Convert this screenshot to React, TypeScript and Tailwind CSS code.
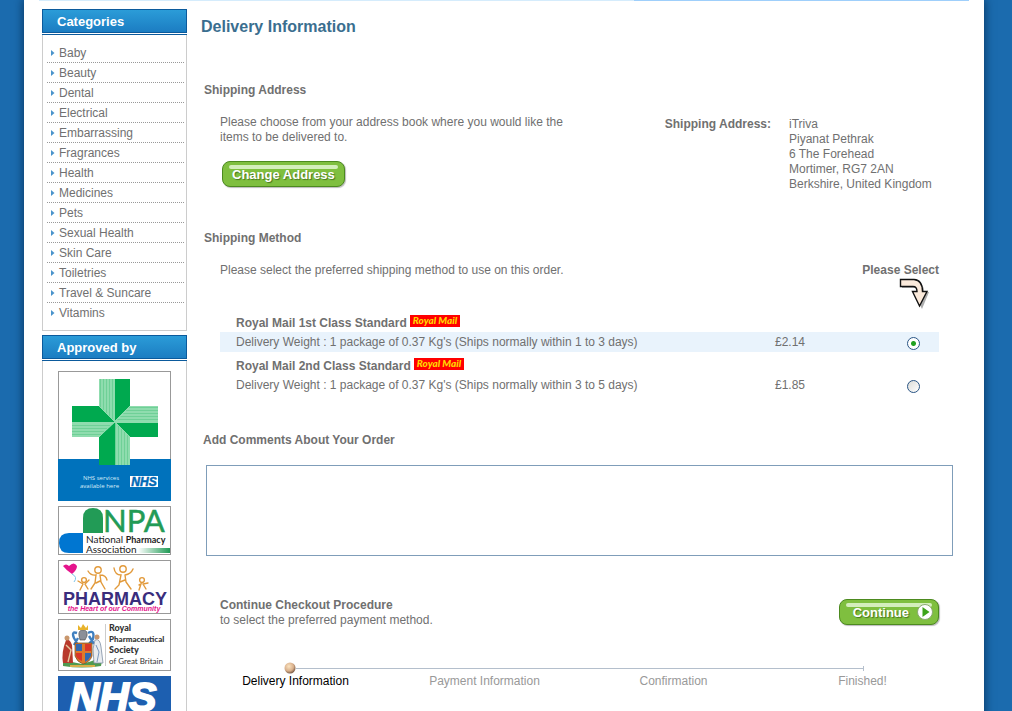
import { useState } from 'react';
import type { ReactNode } from 'react';

const CATEGORIES = [
  'Baby',
  'Beauty',
  'Dental',
  'Electrical',
  'Embarrassing',
  'Fragrances',
  'Health',
  'Medicines',
  'Pets',
  'Sexual Health',
  'Skin Care',
  'Toiletries',
  'Travel & Suncare',
  'Vitamins',
];

const METHODS = [
  { id: 'first', name: 'Royal Mail 1st Class Standard', days: '1 to 3', price: '£2.14' },
  { id: 'second', name: 'Royal Mail 2nd Class Standard', days: '3 to 5', price: '£1.85' },
];

const STEPS = ['Delivery Information', 'Payment Information', 'Confirmation', 'Finished!'];

function SideBox({ title, children }: { title: string; children: ReactNode }) {
  return (
    <section>
      <h2 className="h-6 border border-[#0b5a9c] bg-linear-to-b from-[#2b9cd8] to-[#1c7dc2] pl-3.5 text-[13px] leading-6 font-bold text-white">
        {title}
      </h2>
      <div className="mt-px border-x border-b border-[#ccc]">
        <div className="-mx-px h-px bg-[#0b5a9c]" />
        {children}
      </div>
    </section>
  );
}

function CrossLogo() {
  return (
    <svg width="113" height="130" viewBox="0 0 113 130" role="img" aria-label="NHS services available here">
      <defs>
        <pattern id="stripeV" width="3" height="4" patternUnits="userSpaceOnUse">
          <rect width="3" height="4" fill="#8fdcae" />
          <rect width="1" height="4" fill="#6fd097" />
        </pattern>
        <pattern id="stripeH" width="4" height="3" patternUnits="userSpaceOnUse">
          <rect width="4" height="3" fill="#8fdcae" />
          <rect width="4" height="1" fill="#6fd097" />
        </pattern>
      </defs>
      <rect x=".5" y=".5" width="112" height="129" fill="#fff" stroke="#999" />
      <rect y="88" width="113" height="42" fill="#0072bc" />
      <path d="M41 8H57V51L41 35Z" fill="url(#stripeV)" />
      <path d="M57 8H72V35L57 51Z" fill="#00a94f" />
      <path d="M72 35H100V51H57Z" fill="url(#stripeH)" />
      <path d="M57 51H100V66H72Z" fill="#00a94f" />
      <path d="M57 51L72 66V94H57Z" fill="url(#stripeV)" />
      <path d="M57 51V94H41V66Z" fill="#00a94f" />
      <path d="M57 51L41 66H14V51Z" fill="url(#stripeH)" />
      <path d="M14 35H41L57 51H14Z" fill="#00a94f" />
      <path d="M14 51.5H100M41 35L72 66M72 35L41 66" stroke="#8fdcae" strokeWidth="1" />
      <g fill="#d8ecf8" fontFamily="Open Sans, sans-serif" fontSize="6" textAnchor="end">
        <text x="61" y="109">NHS services</text>
        <text x="61" y="117">available here</text>
      </g>
      <rect x="72" y="105" width="28" height="11" fill="#fff" />
      <text x="86" y="115" textAnchor="middle" fill="#0068b5" fontFamily="Liberation Sans, sans-serif" fontWeight="900" fontStyle="italic" fontSize="12" stroke="#0068b5" strokeWidth=".5">
        NHS
      </text>
    </svg>
  );
}

function NpaLogo() {
  return (
    <svg width="113" height="49" viewBox="0 0 113 49" role="img" aria-label="National Pharmacy Association">
      <defs>
        <linearGradient id="npaBar">
          <stop offset="0" stopColor="#fff" />
          <stop offset="1" stopColor="#1f9a55" />
        </linearGradient>
      </defs>
      <rect x=".5" y=".5" width="112" height="48" fill="#fff" stroke="#999" />
      <path d="M25 27V12Q25 2 35 2Q45 2 45 12V27Z" fill="#229b56" />
      <path d="M25 27V47H11Q1 47 1 37Q1 27 11 27Z" fill="#0076d1" />
      <text x="45" y="26" fill="#229b56" stroke="#229b56" strokeWidth=".5" fontFamily="Lato, sans-serif" fontSize="31">
        NPA
      </text>
      <g fill="#222" fontFamily="Lato, sans-serif" fontSize="10">
        <text x="28" y="37">
          National <tspan fontWeight="700" fontSize="9">Pharmacy</tspan>
        </text>
        <text x="28" y="47">Association</text>
      </g>
      <rect x="80" y="42" width="32" height="5" fill="url(#npaBar)" />
    </svg>
  );
}

function PharmacyLogo() {
  return (
    <svg width="113" height="54" viewBox="0 0 113 54" role="img" aria-label="Pharmacy, the Heart of our Community">
      <rect x=".5" y=".5" width="112" height="53" fill="#fff" stroke="#999" />
      <path d="M5 6Q8 3 11 6Q16 1 19 6Q19 10 14 14Q8 10 5 6Z" fill="#e5148c" />
      <path d="M14 14Q20 17 16 22" fill="none" stroke="#7cc4e8" />
      <g fill="none" stroke="#e29a3b" strokeWidth="1.4" strokeLinecap="round">
        <circle cx="40" cy="10" r="3.2" />
        <path d="M30 11Q33 16 38 15L37 23L33 29M42 15Q48 15 49 20M42 15L43 22L47 29M38 23L42 21" />
        <circle cx="65" cy="9" r="3.2" />
        <path d="M56 8Q57 15 63 15L61 25L57 29M67 15Q73 14 75 9M67 15L68 22L73 29M62 22L67 20" />
        <circle cx="26" cy="20" r="2.4" />
        <path d="M20 21L25 24L22 30M31 20L27 24L30 29" />
        <circle cx="84" cy="20" r="2.4" />
        <path d="M81 25L83 24L81 30M90 23L85 24L88 29" />
      </g>
      <text x="57" y="45" textAnchor="middle" fill="#3a2d7d" fontFamily="Liberation Sans, sans-serif" fontWeight="700" fontSize="18">
        PHARMACY
      </text>
      <text x="56" y="51" textAnchor="middle" fill="#e5148c" fontFamily="Liberation Sans, sans-serif" fontWeight="700" fontStyle="italic" fontSize="7">
        the Heart of our Community
      </text>
    </svg>
  );
}

function SocietyLogo() {
  return (
    <svg width="113" height="52" viewBox="0 0 113 52" role="img" aria-label="Royal Pharmaceutical Society of Great Britain">
      <rect x=".5" y=".5" width="112" height="51" fill="#fff" stroke="#999" />
      <path d="M5 42Q10 38 14 43L24 45L34 42Q40 38 44 42L43 47Q24 50 5 47Z" fill="#4f9a50" />
      <path d="M19 14Q13 12 16 19L19 24M30 14Q37 10 35 20L31 25M20 19L16 26M31 17L36 25" fill="none" stroke="#3f7fc0" strokeWidth="2.4" />
      <path d="M21 17Q20 11 25 11Q30 11 29 17L27 21H22Z" fill="#8b8f98" stroke="#444" strokeWidth=".6" />
      <path d="M20 6L23 9L25 5L28 9L30 6V11H20Z" fill="#e8b32b" />
      <path d="M17 24H34V37Q32 43 25 45Q19 43 17 37Z" fill="#e07a2b" stroke="#6b4a22" strokeWidth=".7" />
      <path d="M18 25H24V32H18ZM27 34H33V37Q31 41 27 43Z" fill="#3469b0" />
      <path d="M27 25H33V32H27ZM18 34H24V42Q19 40 18 37Z" fill="#d8372b" />
      <path d="M8 21Q12 20 14 26L15 44H5Q3 34 8 21Z" fill="#b83a2c" />
      <path d="M8 26L13 31L10 43" fill="none" stroke="#e7c9a0" strokeWidth="1.4" />
      <path d="M37 21Q42 19 43 28L45 44H36L35 30Z" fill="#e9ecf0" stroke="#7f8fa3" strokeWidth=".8" />
      <path d="M38 26L41 33L39 43" fill="none" stroke="#7897bd" />
      <circle cx="9" cy="19" r="2.5" fill="#c9976d" />
      <circle cx="39" cy="18" r="2.5" fill="#c9976d" />
      <path d="M12 47H37" stroke="#d8b04a" strokeWidth="2" />
      <path d="M47.5 5V47" stroke="#ccc" />
      <g fill="#333" fontFamily="Lato, sans-serif" fontSize="9" fontWeight="900">
        <text x="51" y="12">Royal</text>
        <text x="51" y="23" fontSize="8">Pharmaceutical</text>
        <text x="51" y="34">Society</text>
        <text x="51" y="45" fontSize="8" fontWeight="400">of Great Britain</text>
      </g>
    </svg>
  );
}

function NhsLogo() {
  return (
    <svg width="113" height="46" viewBox="0 0 113 46" role="img" aria-label="NHS">
      <rect width="113" height="46" fill="#1d5fb0" />
      <text x="55" y="35" textAnchor="middle" fill="#fff" stroke="#fff" strokeWidth="2" fontFamily="Liberation Sans, sans-serif" fontWeight="700" fontStyle="italic" fontSize="41">
        NHS
      </text>
    </svg>
  );
}

function RoyalMailBadge() {
  return (
    <svg className="inline-block align-baseline" width="50" height="12" viewBox="0 0 50 12" role="img" aria-label="Royal Mail">
      <rect width="50" height="12" fill="#f00" />
      <text x="25" y="9" textAnchor="middle" fill="#ffd800" fontFamily="Lato, sans-serif" fontWeight="900" fontStyle="italic" fontSize="10">
        Royal Mail
      </text>
    </svg>
  );
}

function SelectArrow() {
  return (
    <svg className="mr-2.5 ml-auto" width="30" height="31" viewBox="0 0 30 31" aria-hidden="true">
      <path d="M3 3H16Q25 4 25 14H30L23 31L15 15H20Q20 10 16 10H3Z" fill="#777" opacity=".6" />
      <path d="M1.5 1.5H15Q23.500 2 23.500 13.500H28L20.500 28L13.500 13.500H18Q18 8.500 14 8.500H1.500Z" fill="#fbeadb" stroke="#111" strokeWidth="1.4" />
    </svg>
  );
}

function GreenButton({ children }: { children: ReactNode }) {
  return (
    <button
      type="button"
      className="relative flex h-[26px] items-center gap-2 rounded-lg border border-[#4c8a1f] bg-[#7fbf3f] px-[9px] text-[13px] font-bold text-white shadow-[1px_1px_1px_#bbb] [text-shadow:1px_1px_1px_#47751f]"
    >
      <span className="absolute inset-x-1.5 top-[3px] h-1 rounded-sm bg-[#d4eebc]" />
      {children}
    </button>
  );
}

export default function App() {
  const [method, setMethod] = useState('first');

  return (
    <div className="h-screen overflow-hidden bg-[#1b6bae] pr-7 pl-6 font-['Liberation_Sans',Arial,sans-serif] text-xs leading-[15px] text-[#707070]">
      <div className="min-h-full bg-white shadow-[0_0_9px_1px_#0a3a66]">
        <div className="mr-[15px] ml-[15px] flex h-px">
          <div className="flex-[595] bg-[#d5ecfc]" />
          <div className="flex-[335] bg-[#9fcffb]" />
        </div>

        <div className="flex">
          <aside className="ml-[18px] flex w-[145px] shrink-0 flex-col gap-1 pt-2">
            <SideBox title="Categories">
              <ul className="pt-2 pr-0.5 pb-[7px] pl-1">
                {CATEGORIES.map((name) => (
                  <li key={name} className="h-5 border-b border-dotted border-[#999] last:border-transparent">
                    <a href="#" className="flex items-center gap-1 pl-1 leading-5">
                      <svg width="4" height="6" viewBox="0 0 4 6" aria-hidden="true">
                        <path d="M0 0L3.500 3L0 6Z" fill="#4a94cc" />
                      </svg>
                      {name}
                    </a>
                  </li>
                ))}
              </ul>
            </SideBox>
            <SideBox title="Approved by">
              <div className="flex flex-col items-center gap-[5px] pt-2.5 pb-3">
                <CrossLogo />
                <NpaLogo />
                <PharmacyLogo />
                <SocietyLogo />
                <NhsLogo />
              </div>
            </SideBox>
          </aside>

          <main className="mr-[31px] ml-3.5 flex-1 pt-4">
            <h1 className="text-base leading-5 font-bold text-[#3a6e8f]">Delivery Information</h1>

            <h2 className="mt-[46px] ml-[3px] font-bold">Shipping Address</h2>
            <div className="mt-[17px] mr-3.5 ml-[19px] flex justify-between">
              <div className="w-[370px]">
                <p>Please choose from your address book where you would like the items to be delivered to.</p>
                <div className="mt-4 ml-0.5 flex">
                  <GreenButton>
                    <span className="relative">Change Address</span>
                  </GreenButton>
                </div>
              </div>
              <div className="flex gap-[18px] pt-0.5">
                <strong>Shipping Address:</strong>
                <address className="w-[150px] whitespace-nowrap not-italic">
                  iTriva
                  <br />
                  Piyanat Pethrak
                  <br />
                  6 The Forehead
                  <br />
                  Mortimer, RG7 2AN
                  <br />
                  Berkshire, United Kingdom
                </address>
              </div>
            </div>

            <h2 className="mt-[39px] ml-[3px] font-bold">Shipping Method</h2>
            <div className="mt-[17px] mr-3.5 ml-[19px] flex justify-between">
              <p>Please select the preferred shipping method to use on this order.</p>
              <strong>Please Select</strong>
            </div>
            <div className="mr-3.5 ml-[19px]">
              <SelectArrow />
              <table className="w-full">
                {METHODS.map((m) => (
                  <tbody key={m.id}>
                    <tr>
                      <th colSpan={3} scope="rowgroup" className="h-[23px] pt-1 pl-4 text-left font-bold">
                        {m.name} <RoyalMailBadge />
                      </th>
                    </tr>
                    <tr className={method === m.id ? 'bg-[#e9f3fc]' : ''}>
                      <td className="h-5 pl-4">
                        <label htmlFor={m.id}>
                          Delivery Weight : 1 package of 0.37 Kg's (Ships normally within {m.days} days)
                        </label>
                      </td>
                      <td className="w-[113px]">{m.price}</td>
                      <td className="w-[51px]">
                        <input
                          id={m.id}
                          type="radio"
                          name="method"
                          checked={method === m.id}
                          onChange={() => setMethod(m.id)}
                          className="mx-auto mt-0.5 block size-[13px] appearance-none rounded-full border border-[#2a5585] bg-linear-to-br from-[#dcdcd8] to-white checked:bg-[radial-gradient(circle,#21a121_2px,#fff_3px)]"
                        />
                      </td>
                    </tr>
                  </tbody>
                ))}
              </table>
            </div>

            <label htmlFor="comments" className="mt-[38px] ml-0.5 block font-bold">
              Add Comments About Your Order
            </label>
            <div className="mt-[17px] ml-[5px]">
              <textarea id="comments" className="block h-[91px] w-full resize-none border border-[#7f9db9] bg-white p-1" />
            </div>

            <div className="mt-[42px] mr-3.5 ml-[19px] flex items-start justify-between">
              <p>
                <strong>Continue Checkout Procedure</strong>
                <br />
                to select the preferred payment method.
              </p>
              <div className="mt-px">
                <GreenButton>
                  <span className="relative pl-1">Continue</span>
                  <svg className="relative -mr-1" width="16" height="16" viewBox="0 0 16 16" aria-hidden="true">
                    <circle cx="8" cy="8" r="7.5" fill="#fff" stroke="#8aa873" />
                    <path d="M5.500 3L12.500 8L5.500 13Z" fill="#3da41a" />
                  </svg>
                </GreenButton>
              </div>
            </div>

            <div className="mt-[34px] mr-[89px] ml-[83px] flex items-center">
              <svg width="12" height="12" viewBox="0 0 12 12" aria-hidden="true">
                <defs>
                  <radialGradient id="ball" cx=".4" cy=".35" r=".7">
                    <stop offset="0" stopColor="#fbe3c0" />
                    <stop offset=".6" stopColor="#d9b08c" />
                    <stop offset="1" stopColor="#6a4c38" />
                  </radialGradient>
                </defs>
                <circle cx="6" cy="6" r="5.5" fill="url(#ball)" />
              </svg>
              <div className="h-px flex-1 bg-[#b4bfcc]" />
              <div className="h-[5px] w-px bg-[#b4bfcc]" />
            </div>
            <ol className="-mr-1 grid grid-cols-4 text-center">
              {STEPS.map((step, i) => (
                <li key={step} className={i === 0 ? 'text-black' : 'text-[#999]'}>
                  {step}
                </li>
              ))}
            </ol>
          </main>
        </div>
      </div>
    </div>
  );
}
